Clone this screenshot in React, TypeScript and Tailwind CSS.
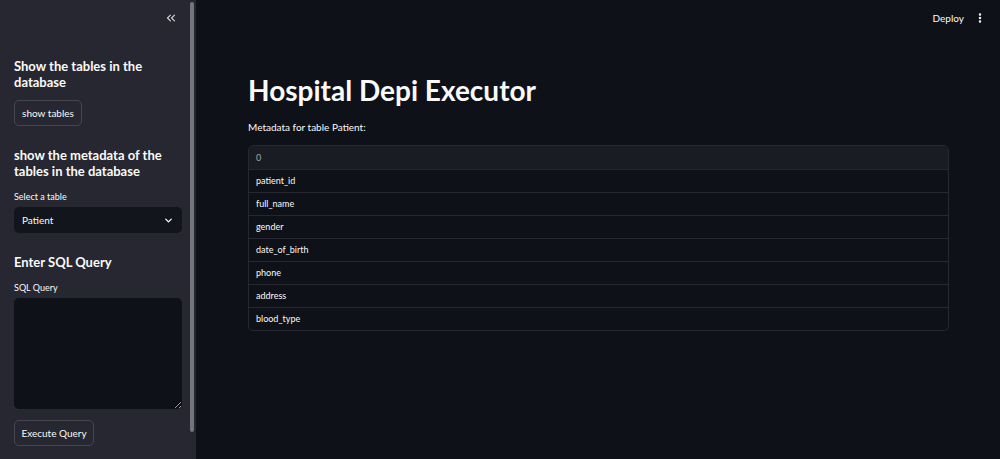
import { ChevronDown, ChevronsLeft, EllipsisVertical } from 'lucide-react';

const columns = ['patient_id', 'full_name', 'gender', 'date_of_birth', 'phone', 'address', 'blood_type'];

export default function App() {
    return (
        <div
            className="flex h-[459px] w-[1000px] overflow-hidden bg-[#0e1117] text-[#fafafa]"
            style={{ fontFamily: 'Lato, "Noto Sans", sans-serif' }}
        >
            {/* Sidebar */}
            <aside className="relative flex h-full w-[196px] shrink-0 flex-col bg-[#262730] pl-[14px] pr-[14px]">
                <div className="flex h-[36px] items-center justify-end pr-[4px]">
                    <ChevronsLeft className="h-[14px] w-[14px] text-[#d0d0d5]" strokeWidth={2} />
                </div>
                <h3 className="mt-[22px] text-[13px] font-bold leading-[16px]">Show the tables in the database</h3>
                <button className="mt-[10px] h-[26px] w-[68px] rounded-[5px] border border-[#45464f] text-[10px]">
                    show tables
                </button>
                <h3 className="mt-[21px] text-[13px] font-bold leading-[16px]">show the metadata of the tables in the database</h3>
                <label className="mt-[12px] text-[9px] leading-[12px]">Select a table</label>
                <div className="mt-[4px] flex h-[26px] items-center justify-between rounded-[5px] bg-[#13151c] pl-[8px] pr-[8px] text-[10px]">
                    <span>Patient</span>
                    <ChevronDown className="h-[11px] w-[11px]" strokeWidth={3} />
                </div>
                <h3 className="mt-[21px] text-[13px] font-bold leading-[16px]">Enter SQL Query</h3>
                <label className="mt-[12px] text-[9px] leading-[12px]">SQL Query</label>
                <textarea className="mt-[4px] h-[111px] resize-y rounded-[5px] bg-[#0e1117] outline-none" />
                <button className="mt-[11px] h-[26px] w-[80px] rounded-[5px] border border-[#45464f] text-[10px]">
                    Execute Query
                </button>
                {/* scrollbar */}
                <div className="absolute right-[2px] top-[2px] h-[430px] w-[4px] rounded-full bg-[#74757c]" />
            </aside>

            {/* Main */}
            <main className="flex flex-1 flex-col">
                <header className="flex h-[36px] items-center justify-end gap-[10px] pr-[14px] text-[10px]">
                    <span>Deploy</span>
                    <EllipsisVertical className="h-[12px] w-[12px]" strokeWidth={3} />
                </header>
                <div className="pl-[52px] pr-[51px]">
                    <h1 className="mt-[36px] text-[28px] font-bold leading-[36px]">Hospital Depi Executor</h1>
                    <p className="mt-[12px] text-[10px] leading-[14px]">Metadata for table Patient:</p>
                    <div className="mt-[11px] overflow-hidden rounded-[5px] border border-[#262730] text-[9px]">
                        <div className="flex h-[23px] items-center bg-[#1a1c24] px-[7px] text-[#a3a5ad]">0</div>
                        {columns.map((c) => (
                            <div key={c} className="flex h-[23px] items-center border-t border-[#262730] px-[7px]">
                                {c}
                            </div>
                        ))}
                    </div>
                </div>
            </main>
        </div>
    );
}
